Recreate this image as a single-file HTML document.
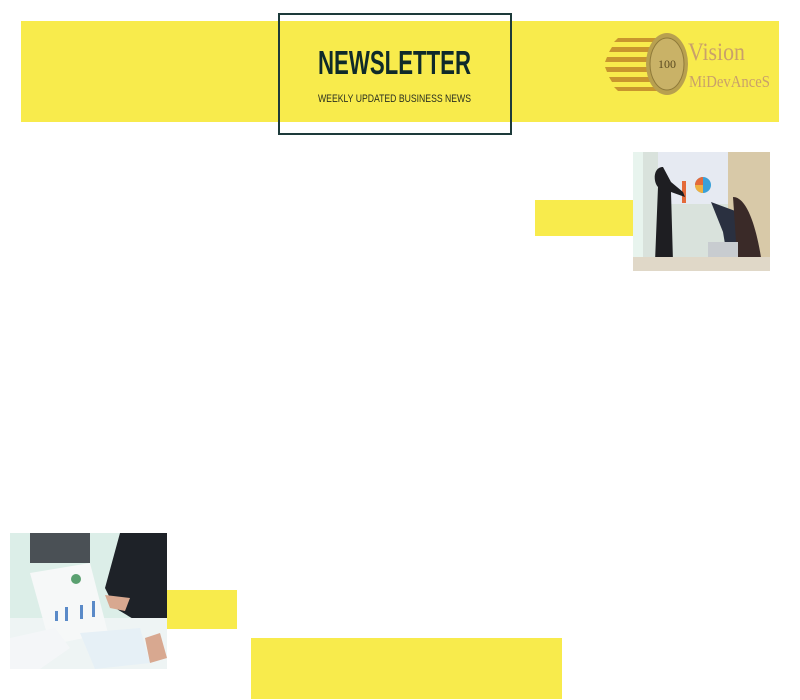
<!DOCTYPE html>
<html><head><meta charset="utf-8"><style>
html,body{margin:0;padding:0;background:#fff;width:800px;height:700px;overflow:hidden;position:relative;font-family:"Liberation Sans",sans-serif}
.y{position:absolute;background:#f8eb4c}
.abs{position:absolute}
</style></head><body>
<div class="y" style="left:21px;top:21px;width:758px;height:101px"></div>
<div class="abs" style="left:278px;top:13px;width:230px;height:118px;border:2px solid #1d3a3a"></div>
<svg class="abs" style="left:0;top:0" width="800" height="140">
<text x="318" y="74" font-family="Liberation Sans" font-weight="bold" font-size="33" fill="#0f2a2a" textLength="153" lengthAdjust="spacingAndGlyphs">NEWSLETTER</text>
<text x="318" y="102" font-family="Liberation Sans" font-size="11" fill="#2a3020" textLength="153" lengthAdjust="spacingAndGlyphs">WEEKLY UPDATED BUSINESS NEWS</text>
</svg>
<svg class="abs" style="left:600px;top:30px" width="180" height="70">
<g fill="#c8962e">
<polygon points="18,8 60,8 60,12 14,12"/>
<polygon points="12,17 60,17 60,22 9,22"/>
<polygon points="7,27 60,27 60,32 5,32"/>
<polygon points="5,37 60,37 60,42 7,42"/>
<polygon points="9,47 60,47 60,52 12,52"/>
<polygon points="14,57 60,57 60,61 18,61"/>
</g>
<ellipse cx="67" cy="34" rx="21" ry="31" fill="#b8a050"/>
<ellipse cx="67" cy="34" rx="17" ry="26" fill="#c9b267" stroke="#8f7a3a" stroke-width="1"/>
<text x="67" y="38" text-anchor="middle" font-family="Liberation Serif" font-size="12" fill="#5a4a20">100</text>
<text x="88" y="30" font-family="Liberation Serif" font-size="25" fill="#c9a06a" textLength="57" lengthAdjust="spacingAndGlyphs">Vision</text>
<text x="89" y="57" font-family="Liberation Serif" font-size="17" fill="#c9a06a" textLength="81" lengthAdjust="spacingAndGlyphs">MiDevAnceS</text>
</svg>
<div class="y" style="left:535px;top:200px;width:98px;height:36px"></div>
<svg class="abs" style="left:633px;top:152px" width="137" height="119">
<rect width="137" height="119" fill="#d9e2dc"/>
<rect x="0" y="0" width="10" height="119" fill="#e8f4ee"/>
<rect x="25" y="0" width="70" height="52" fill="#e6eaf2"/>
<rect x="95" y="0" width="42" height="119" fill="#d8c9a8"/>
<rect x="49" y="29" width="4" height="22" fill="#e46a3a"/>
<circle cx="70" cy="33" r="8" fill="#3aa0d8"/>
<path d="M70,33 L70,25 A8,8 0 0,0 62,33 Z" fill="#e46a3a"/>
<path d="M70,33 L62,33 A8,8 0 0,0 70,41 Z" fill="#f0b040"/>
<path d="M30,15 C20,15 20,30 25,35 L22,110 L40,110 L38,40 L52,45 L50,40 L38,30 Z" fill="#1e1e22"/>
<path d="M78,50 L90,80 L95,110 L120,110 L118,80 L105,60 Z" fill="#2a3040"/>
<path d="M100,45 C115,45 125,80 130,119 L105,119 Z" fill="#3a2a28"/>
<rect x="75" y="90" width="30" height="22" fill="#c8ccd0"/>
<rect x="0" y="105" width="137" height="14" fill="#e0d8c8"/>
</svg>
<svg class="abs" style="left:10px;top:533px" width="157" height="136">
<rect width="157" height="136" fill="#dceee8"/>
<rect x="20" y="0" width="60" height="30" fill="#4a5055"/>
<path d="M110,0 L157,0 L157,95 L130,90 L105,75 L95,55 Z" fill="#1e2228"/>
<rect x="0" y="85" width="157" height="51" fill="#eef4f4"/>
<polygon points="20,40 80,30 98,100 40,112" fill="#f6f8f8"/>
<g fill="#5a8ac8"><rect x="45" y="78" width="3" height="10"/><rect x="55" y="74" width="3" height="14"/><rect x="70" y="72" width="3" height="14"/><rect x="82" y="68" width="3" height="16"/></g>
<circle cx="66" cy="46" r="5" fill="#5aa070"/>
<polygon points="70,100 130,95 140,130 85,136" fill="#e6f0f6"/>
<path d="M0,105 L45,95 L60,115 L30,136 L0,136 Z" fill="#f4f6f8"/>
<path d="M95,62 L120,65 L115,78 L100,75 Z" fill="#d8a890"/>
<path d="M135,105 L150,100 L157,125 L140,130 Z" fill="#d8a890"/>
</svg>
<div class="y" style="left:167px;top:590px;width:70px;height:39px"></div>
<div class="y" style="left:251px;top:638px;width:311px;height:61px"></div>
</body></html>
